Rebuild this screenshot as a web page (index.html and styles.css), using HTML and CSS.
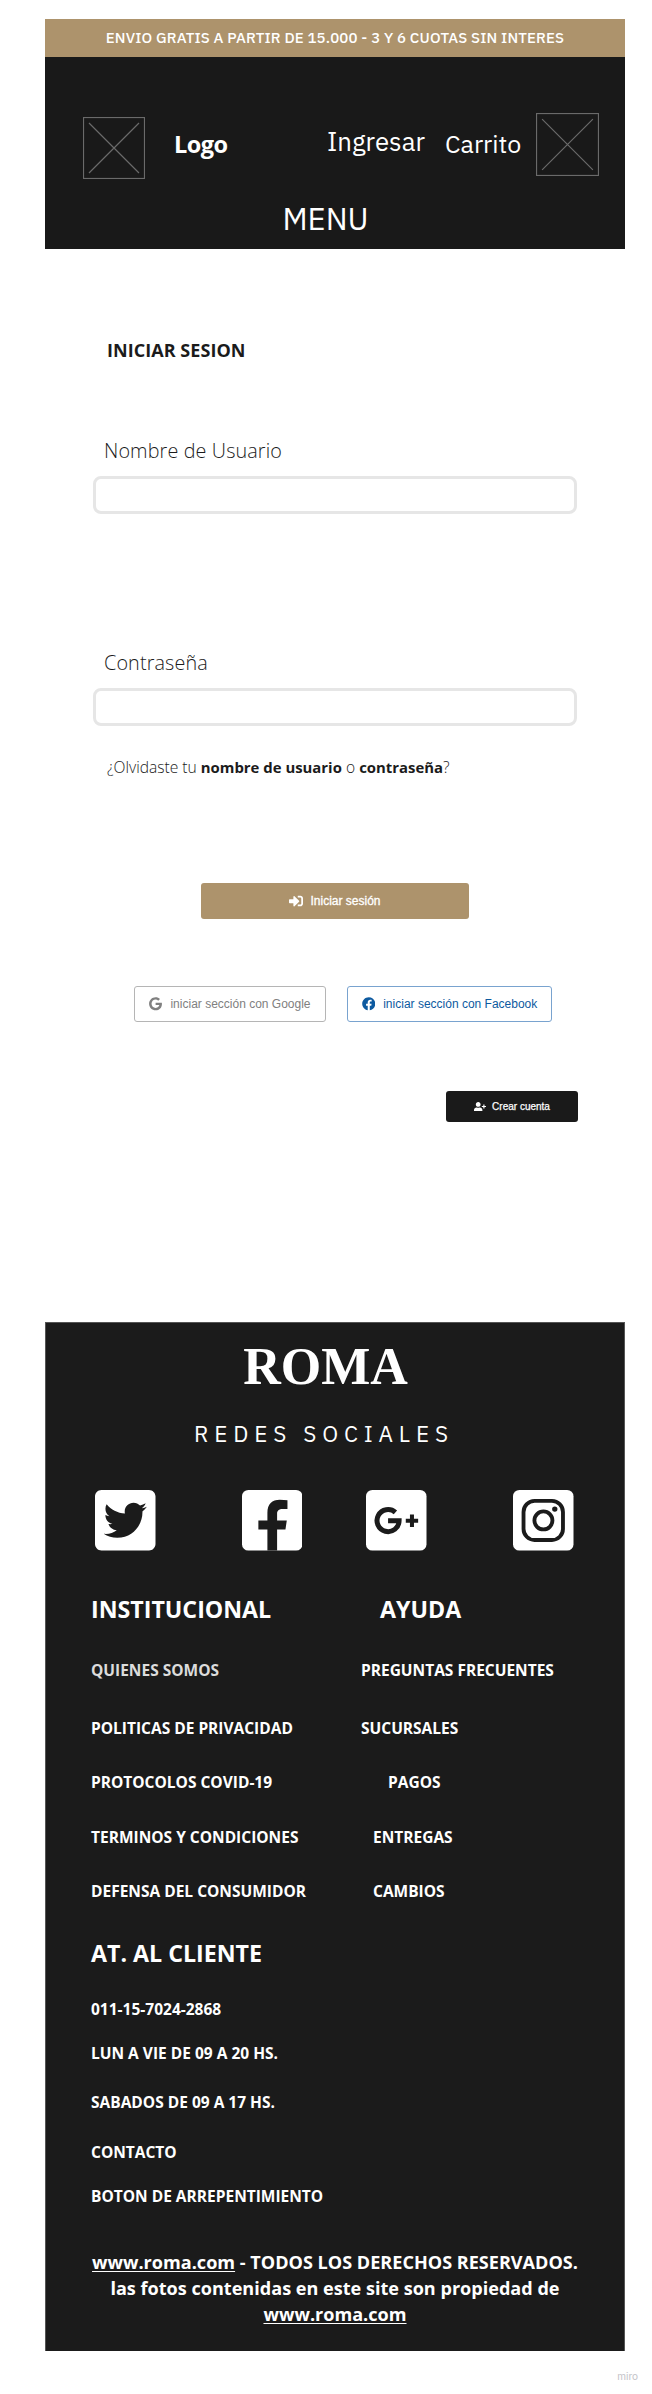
FILE: index.html
```
<!DOCTYPE html>
<html lang="es">
<head>
<meta charset="utf-8">
<title>ROMA - Iniciar sesión</title>
<link rel="stylesheet" href="styles.css">
</head>
<body>
<div class="sheet">
  <div class="banner">ENVIO GRATIS A PARTIR DE 15.000 - 3 Y 6 CUOTAS SIN INTERES</div>
  <header class="header">
    <div class="header-row">
      <svg class="placeholder" viewBox="0 0 62 62"><rect x=".5" y=".5" width="61" height="61"/><path d="M6 6L56 56M56 6L6 56"/></svg>
      <strong class="logo">Logo</strong>
      <a class="link-login">Ingresar</a>
      <a class="link-cart">Carrito</a>
      <svg class="placeholder cart-box" viewBox="0 0 62 62"><rect x=".5" y=".5" width="61" height="61"/><path d="M6 6L56 56M56 6L6 56"/></svg>
    </div>
    <nav class="menu">MENU</nav>
  </header>

  <main class="login">
    <h1 class="title">INICIAR SESION</h1>
    <label class="label" for="user">Nombre de Usuario</label>
    <input class="field" id="user" type="text">
    <label class="label label-pass" for="pass">Contraseña</label>
    <input class="field" id="pass" type="password">
    <p class="forgot">¿Olvidaste tu <b>nombre de usuario</b> o <b>contraseña</b>?</p>
    <button class="btn btn-login"><svg width="14" height="14" viewBox="0 0 512 512"><path d="M416 448h-84c-6.600 0-12-5.400-12-12v-40c0-6.600 5.400-12 12-12h84c17.700 0 32-14.300 32-32V160c0-17.700-14.300-32-32-32h-84c-6.600 0-12-5.400-12-12V76c0-6.600 5.400-12 12-12h84c53 0 96 43 96 96v192c0 53-43 96-96 96zm-47-201L201 79c-15-15-41-4.500-41 17v96H24c-13.300 0-24 10.700-24 24v96c0 13.300 10.700 24 24 24h136v96c0 21.500 26 32 41 17l168-168c9.300-9.400 9.300-24.600 0-34z"/></svg><span>Iniciar sesión</span></button>
    <div class="social-login">
      <button class="btn btn-google"><svg width="13" height="13.500" viewBox="0 0 488 512"><path d="M488 261.800C488 403.300 391.100 504 248 504 110.800 504 0 393.200 0 256S110.800 8 248 8c66.800 0 123 24.500 166.300 64.900l-67.500 64.900C258.500 52.600 94.300 116.600 94.300 256c0 86.500 69.100 156.600 153.700 156.600 98.200 0 135-70.400 140.800-106.900H248v-85.300h236.100c2.300 12.700 3.900 24.900 3.900 41.400z"/></svg><span>iniciar sección con Google</span></button>
      <button class="btn btn-facebook"><svg width="13.500" height="13.500" viewBox="0 0 512 512"><path d="M504 256C504 119 393 8 256 8S8 119 8 256c0 123.780 90.690 226.380 209.250 245V327.690h-63V256h63v-54.640c0-62.150 37-96.480 93.670-96.480 27.140 0 55.220 4.840 55.220 4.840v61h-31.100c-30.620 0-40.170 19-40.170 38.500V256h68.780l-11 71.690h-57.780V501C413.310 482.380 504 379.780 504 256z"/></svg><span>iniciar sección con Facebook</span></button>
    </div>
    <button class="btn btn-create"><svg width="12" height="9.600" viewBox="0 0 640 512"><path d="M624 208h-64v-64c0-8.800-7.200-16-16-16h-32c-8.800 0-16 7.200-16 16v64h-64c-8.800 0-16 7.200-16 16v32c0 8.800 7.200 16 16 16h64v64c0 8.800 7.200 16 16 16h32c8.800 0 16-7.200 16-16v-64h64c8.800 0 16-7.200 16-16v-32c0-8.800-7.200-16-16-16zm-400 48c70.700 0 128-57.300 128-128S294.700 0 224 0 96 57.300 96 128s57.300 128 128 128zm89.600 32h-16.700c-22.200 10.200-46.900 16-72.900 16s-50.600-5.800-72.900-16h-16.700C60.200 288 0 348.200 0 422.400V464c0 26.500 21.500 48 48 48h352c26.500 0 48-21.500 48-48v-41.600c0-74.200-60.200-134.400-134.400-134.400z"/></svg><span>Crear cuenta</span></button>
  </main>

  <footer class="footer">
    <div class="brand">ROMA</div>
    <h2 class="networks">REDES SOCIALES</h2>
    <div class="icons">
      <svg viewBox="0 32 448 448"><path fill="#fff" d="M400 32H48C21.500 32 0 53.500 0 80v352c0 26.500 21.500 48 48 48h352c26.500 0 48-21.500 48-48V80c0-26.500-21.500-48-48-48zm-48.900 158.800c.2 2.800.2 5.700.2 8.500 0 86.700-66 186.600-186.600 186.600-37.200 0-71.700-10.800-100.700-29.400 5.300.6 10.400.8 15.800.8 30.700 0 58.900-10.400 81.400-28-28.800-.6-53-19.500-61.300-45.500 10.100 1.500 19.200 1.500 29.600-1.200-30-6.100-52.500-32.500-52.500-64.400v-.8c8.700 4.900 18.900 7.900 29.600 8.300a65.447 65.447 0 0 1-29.200-54.600c0-12.200 3.200-23.400 8.900-33.100 32.300 39.800 80.800 65.800 135.200 68.600-9.300-44.500 24-80.600 64-80.600 18.900 0 35.900 7.900 47.900 20.700 14.800-2.800 29-8.300 41.600-15.800-4.900 15.200-15.200 28-28.800 36.100 13.200-1.400 26-5.100 37.800-10.200-8.900 13.100-20.100 24.700-32.900 34z"/></svg>
      <svg viewBox="0 0 181 181"><rect width="181" height="181" rx="19" fill="#fff"/><path fill="#1b1b1b" d="M76 181V118H49V91H76V68C76 42 90 29 113 29Q126 29 136 31V57H122C110 57 105 62 105 71V91H134L130 118H105V181Z"/></svg>
      <svg viewBox="0 0 181 181"><rect width="181" height="181" rx="19" fill="#fff"/><path fill="none" stroke="#1b1b1b" stroke-width="15" d="M88 67A33 33 0 1 0 99 92H66"/><path fill="none" stroke="#1b1b1b" stroke-width="12" d="M119 92H156M137.500 73.500V110.500"/></svg>
      <svg viewBox="0 0 181 181"><rect width="181" height="181" rx="19" fill="#fff"/><g fill="none" stroke="#1b1b1b" stroke-width="11.500"><rect x="31.500" y="32.500" width="118" height="117" rx="33"/><circle cx="91" cy="91" r="27"/></g><circle cx="125" cy="57" r="8" fill="#1b1b1b"/></svg>
    </div>
    <div class="links">
      <h3>INSTITUCIONAL</h3><h3 class="in-ayuda">AYUDA</h3>
      <a class="dim">QUIENES SOMOS</a><a>PREGUNTAS FRECUENTES</a>
      <a>POLITICAS DE PRIVACIDAD</a><a>SUCURSALES</a>
      <a>PROTOCOLOS COVID-19</a><a class="in-pagos">PAGOS</a>
      <a>TERMINOS Y CONDICIONES</a><a class="in-envios">ENTREGAS</a>
      <a>DEFENSA DEL CONSUMIDOR</a><a class="in-envios">CAMBIOS</a>
    </div>
    <div class="contact">
      <h3>AT. AL CLIENTE</h3>
      <a>011-15-7024-2868</a>
      <a>LUN A VIE DE 09 A 20 HS.</a>
      <a>SABADOS DE 09 A 17 HS.</a>
      <a>CONTACTO</a>
      <a>BOTON DE ARREPENTIMIENTO</a>
    </div>
    <p class="legal"><u>www.roma.com</u> - TODOS LOS DERECHOS RESERVADOS.<br>las fotos contenidas en este site son propiedad de<br><u>www.roma.com</u></p>
  </footer>
</div>
<div class="mark">miro</div>
</body>
</html>
```
FILE: styles.css
```
* { box-sizing: border-box; }
body {
  margin: 0;
  padding-top: 19px;
  height: 2394px;
  background: #fff;
  color: #1b1b1b;
  font-family: "Open Sans", sans-serif;
}
h1, h2, h3, p { margin: 0; }
svg { display: block; }

.sheet { width: 580px; margin-left: 45px; }

.banner {
  height: 38px;
  background: #ad936c;
  color: #fff;
  font: 500 15px/37px "IBM Plex Sans", "Noto Sans", sans-serif;
  letter-spacing: .14px;
  text-align: center;
  white-space: nowrap;
}

.header { height: 192px; background: #191919; color: #fff; }
.header-row {
  display: grid;
  grid-template-columns: 91px 153px 118px 91px 63px;
  align-items: start;
  height: 142px;
  padding-left: 38px;
}
.placeholder {
  width: 62px;
  height: 62px;
  margin-top: 60px;
  fill: none;
  stroke: #6a6a6a;
  stroke-width: 1.2;
}
.cart-box { width: 63px; height: 63px; margin-top: 56px; }
.logo { margin-top: 72px; font-size: 23.500px; line-height: 30px; letter-spacing: -.5px; }
.link-login, .link-cart {
  font: 25.800px/30px "IBM Plex Sans", "Noto Sans", sans-serif;
}
.link-login { margin-top: 70px; }
.link-cart { margin-top: 72px; font-size: 25px; }
.menu {
  padding-right: 19px;
  font: 31px/40px "IBM Plex Sans", "Noto Sans", sans-serif;
  text-align: center;
}

.login { display: flex; flex-direction: column; height: 1073px; padding: 89px 48px 0; }
.title { padding-left: 14px; font-size: 18px; font-weight: 700; line-height: 24px; letter-spacing: .05px; }
.label {
  margin: 77px 0 13px;
  padding-left: 11px;
  font-size: 19.800px;
  font-weight: 300;
  line-height: 24px;
  letter-spacing: .12px;
}
.label-pass { margin-top: 137px; }
.field {
  width: 484px;
  height: 38px;
  border: 3px solid #e6e6e6;
  border-radius: 8px;
  background: #fff;
}
.forgot { margin: 29px 0 -1px; padding-left: 14px; font-size: 15.600px; font-weight: 300; line-height: 24px; }
.forgot b { font-size: 14.900px; font-weight: 700; }

.btn {
  display: flex;
  align-items: center;
  justify-content: center;
  gap: 7px;
  height: 36px;
  padding: 0;
  border: 0;
  border-radius: 3px;
  font: 12px/14px "Liberation Sans", Arial, sans-serif;
  white-space: nowrap;
}
.btn svg { fill: currentColor; }
.btn-login { width: 268px; margin: 105px 0 0 108px; background: #ad936c; color: #fff; -webkit-text-stroke: .3px #fff; }
.social-login { display: flex; gap: 21px; margin: 67px 0 0 41px; }
.btn-google { width: 192px; gap: 8px; border: 1px solid #b5b5b5; background: #fff; color: #808080; }
.btn-facebook { width: 205px; gap: 8px; border: 1px solid #79a3cf; background: #fff; color: #0d5aa0; }
.btn-create {
  align-self: flex-end;
  width: 132px;
  height: 31px;
  margin: 69px -1px 0 0;
  gap: 6px;
  background: #1a1a1a;
  color: #fff;
  font-size: 10px;
  -webkit-text-stroke: .25px #fff;
}

.footer {
  height: 1029px;
  padding: 18px 45px 0;
  border: 1px solid #555;
  border-width: 1px 1px 0;
  background: #1b1b1b;
  color: #fff;
}
.brand {
  padding-right: 19px;
  font: 700 52px/52px "Liberation Serif", "Times New Roman", serif;
  text-align: center;
}
.networks {
  margin: 29px 0 44px 103px;
  font: 400 22.500px/24px "IBM Plex Sans", "Noto Sans", sans-serif;
  letter-spacing: 5.850px;
  white-space: nowrap;
}
.icons {
  display: grid;
  grid-template-columns: 146.500px 124.500px 147px 60px;
  margin: 0 0 46px 4px;
}
.icons svg { width: 60.500px; height: 60.500px; }

.links, .contact { display: grid; font-size: 15.500px; font-weight: 700; line-height: 24px; white-space: nowrap; }
.links { grid-template-columns: 270px 1fr; grid-template-rows: 61px 58px 54px 55px 54px 62px; }
.contact { grid-template-rows: 56px 44px 49px 50px 44px 65px; }
.footer h3 { font-size: 23.200px; line-height: 24px; }
.dim { color: #dcdcdc; }
.in-ayuda { padding-left: 19px; }
.in-pagos { padding-left: 27px; }
.in-envios { padding-left: 12px; }
.legal { font-size: 18.080px; font-weight: 700; line-height: 26px; text-align: center; white-space: nowrap; }
.legal u { text-decoration-thickness: 1px; text-underline-offset: 2px; }

.mark { margin: 14px 14px 0 0; color: #c4c4c8; font: 10px/22px Inter, sans-serif; text-align: right; }
```
